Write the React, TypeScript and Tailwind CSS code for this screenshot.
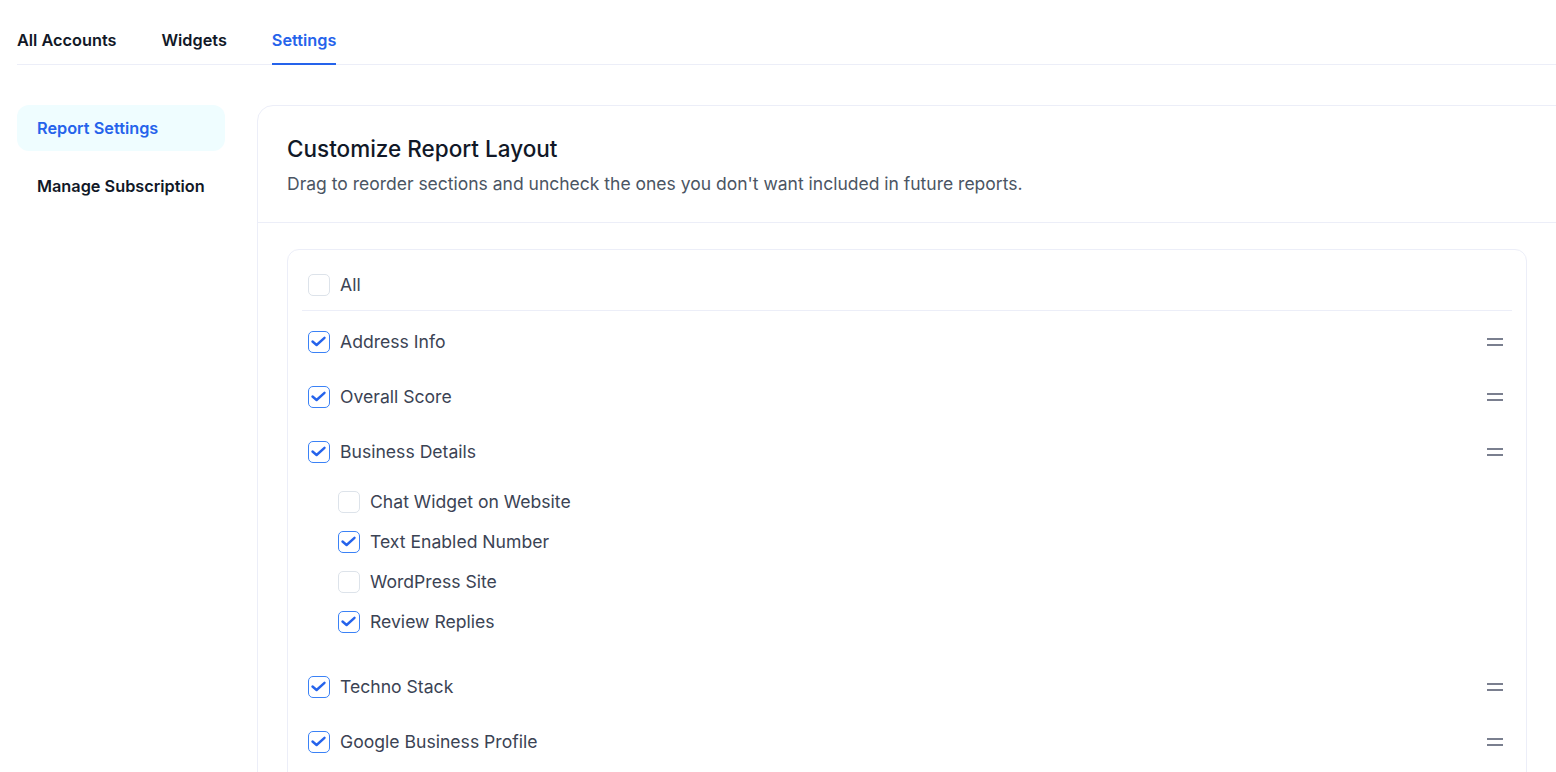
import { useState } from 'react';

type Section = {
  id: string;
  label: string;
  checked: boolean;
  children?: { id: string; label: string; checked: boolean }[];
};

const initialSections: Section[] = [
  { id: 'address', label: 'Address Info', checked: true },
  { id: 'score', label: 'Overall Score', checked: true },
  {
    id: 'business',
    label: 'Business Details',
    checked: true,
    children: [
      { id: 'chat', label: 'Chat Widget on Website', checked: false },
      { id: 'text', label: 'Text Enabled Number', checked: true },
      { id: 'wp', label: 'WordPress Site', checked: false },
      { id: 'replies', label: 'Review Replies', checked: true },
    ],
  },
  { id: 'techno', label: 'Techno Stack', checked: true },
  { id: 'gbp', label: 'Google Business Profile', checked: true },
];

function Checkbox({ checked, onChange }: { checked: boolean; onChange: () => void }) {
  return (
    <button
      type="button"
      onClick={onChange}
      className={`w-[22px] h-[22px] shrink-0 rounded-[5px] border-[1.5px] flex items-center justify-center bg-white ${
        checked ? 'border-[#3b82f6]' : 'border-[#dde3ea]'
      }`}
    >
      {checked && (
        <svg width="22" height="22" viewBox="0 0 22 22" fill="none" className="shrink-0">
          <path d="M4.5 10.5L8.6 14L16.5 6.8" stroke="#2563eb" strokeWidth="2.4" strokeLinecap="round" strokeLinejoin="round" />
        </svg>
      )}
    </button>
  );
}

function DragHandle() {
  return (
    <div className="w-4 flex flex-col gap-[4px] cursor-grab">
      <span className="block h-[2px] w-4 bg-[#7a7f8f]" />
      <span className="block h-[2px] w-4 bg-[#7a7f8f]" />
    </div>
  );
}

export default function App() {
  const [tab, setTab] = useState('Settings');
  const [sections, setSections] = useState(initialSections);

  const allChecked = sections.every(s => s.checked && (s.children || []).every(c => c.checked));

  const toggle = (id: string) =>
    setSections(prev => prev.map(s => (s.id === id ? { ...s, checked: !s.checked } : s)));

  const toggleChild = (pid: string, cid: string) =>
    setSections(prev =>
      prev.map(s =>
        s.id === pid
          ? { ...s, children: s.children?.map(c => (c.id === cid ? { ...c, checked: !c.checked } : c)) }
          : s
      )
    );

  const toggleAll = () => {
    const next = !allChecked;
    setSections(prev =>
      prev.map(s => ({ ...s, checked: next, children: s.children?.map(c => ({ ...c, checked: next })) }))
    );
  };

  return (
    <div className="w-[1556px] h-[772px] overflow-hidden bg-white font-['Inter',sans-serif] text-[#111827]">
      {/* Tabs */}
      <div className="ml-[17px] pt-[28px] flex gap-[45px] border-b border-[#eceef8]">
        {['All Accounts', 'Widgets', 'Settings'].map(t => (
          <button
            key={t}
            onClick={() => setTab(t)}
            className={`pb-[11px] -mb-px text-[16.3px] leading-6 font-semibold border-b-2 ${
              tab === t ? 'text-[#2563eb] border-[#2563eb]' : 'text-[#111827] border-transparent'
            }`}
          >
            {t}
          </button>
        ))}
      </div>

      <div className="flex gap-8 pl-[17px] mt-10">
        {/* Sidebar */}
        <div className="w-[208px] shrink-0 flex flex-col gap-3">
          <div className="h-[46px] px-5 flex items-center rounded-xl bg-[#effdff] text-[#2563eb] font-semibold text-[16.3px] whitespace-nowrap">
            Report Settings
          </div>
          <div className="h-[46px] px-5 flex items-center rounded-xl text-[#111827] font-semibold text-[16.3px] whitespace-nowrap">
            Manage Subscription
          </div>
        </div>

        {/* Card */}
        <div className="w-[1320px] shrink-0 border border-[#eceef8] rounded-2xl">
          <div className="px-[29px] pt-[29px] pb-[26px] border-b border-[#eceef8]">
            <h2 className="text-[22.5px] leading-7 font-medium text-[#111827]">Customize Report Layout</h2>
            <p className="mt-[9px] text-[17.5px] leading-6 text-[#4b5563]">
              Drag to reorder sections and uncheck the ones you don't want included in future reports.
            </p>
          </div>

          <div className="px-[29px] pt-[26px] pb-10">
            <div className="w-[1240px] border border-[#eceef8] rounded-xl px-[14px] pb-10">
              <div className="pl-[6px] pt-[23px] pb-[13px] flex items-center gap-[10px] border-b border-[#eceef8]">
                <Checkbox checked={allChecked} onChange={toggleAll} />
                <span className="text-[17.6px] leading-6 text-[#3b4354]">All</span>
              </div>

              <div className="pt-[3px] pl-[6px] pr-[9px]">
                {sections.map(s => (
                  <div key={s.id}>
                    <div className="h-[55px] flex items-center justify-between">
                      <div className="flex items-center gap-[10px]">
                        <Checkbox checked={s.checked} onChange={() => toggle(s.id)} />
                        <span className="text-[17.6px] leading-6 text-[#3b4354]">{s.label}</span>
                      </div>
                      <DragHandle />
                    </div>
                    {s.children && (
                      <div className="pl-[30px] pt-[3px] pb-[17px]">
                        {s.children.map(c => (
                          <div key={c.id} className="h-10 flex items-center gap-[10px]">
                            <Checkbox checked={c.checked} onChange={() => toggleChild(s.id, c.id)} />
                            <span className="text-[17.6px] leading-6 text-[#3b4354]">{c.label}</span>
                          </div>
                        ))}
                      </div>
                    )}
                  </div>
                ))}
              </div>
            </div>
          </div>
        </div>
      </div>
    </div>
  );
}
